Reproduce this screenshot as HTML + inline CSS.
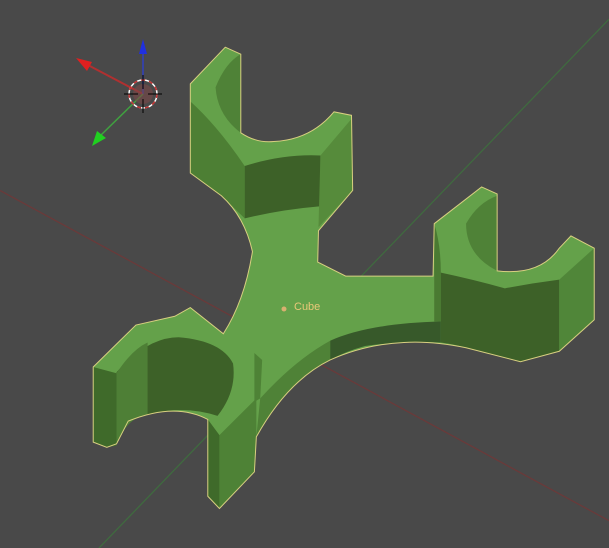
<!DOCTYPE html>
<html><head><style>
html,body{margin:0;padding:0;background:#494949;width:609px;height:548px;overflow:hidden}
svg{position:absolute;left:0;top:0}
</style></head><body>
<svg width="609" height="548" viewBox="0 0 1568 1568" preserveAspectRatio="none">
<line x1="0" y1="545" x2="1568" y2="1490" stroke="#6a3a3a" stroke-width="1.3" vector-effect="non-scaling-stroke"/>
<line x1="1568" y1="55" x2="255" y2="1568" stroke="#3f6a3f" stroke-width="1.3" vector-effect="non-scaling-stroke"/>
<!-- silhouette top face -->
<path d="M490,240 L580,135 L620,155 L620,380 Q660,410 705,405 Q800,400 860,320 L905,330 L908,545 L820,660 L818,750 L890,790 L1115,790 L1118,640 L1240,535 L1280,555 L1280,775 Q1390,790 1440,710 L1470,675 L1530,710 L1530,915 L1440,1005 L1340,1035 L1200,995 Q1110,975 1040,980 Q940,985 850,1030 Q740,1090 660,1250 L655,1350 L565,1455 L535,1420 L535,1200 Q450,1150 330,1205 L300,1270 L275,1280 L240,1265 L240,1050 L350,930 L450,905 L490,880 L575,955 Q630,860 650,720 Q630,620 570,560 L490,495 Z" fill="#64a14a"/>
<!-- top prong faces -->
<path d="M490,290 Q560,360 630,475 L630,625 L570,560 L490,495 Z" fill="#4d7f34"/>
<path d="M630,475 Q730,440 825,445 L825,590 Q720,600 630,625 Z" fill="#3d6128"/>
<path d="M825,445 L905,340 L908,545 L820,650 Z" fill="#568b3b"/>
<path d="M555,250 Q580,180 620,155 L620,380 Q560,330 555,250 Z" fill="#4f8237"/>
<!-- right prong -->
<path d="M1200,640 Q1230,580 1280,560 L1280,775 Q1200,730 1200,640 Z" fill="#4f8237"/>
<path d="M1118,640 Q1135,700 1135,780 L1135,920 L1118,920 Z" fill="#4a7a32"/>
<path d="M1135,780 Q1220,800 1300,825 Q1370,810 1440,800 L1440,1005 L1340,1035 L1200,995 Q1170,985 1135,980 Z" fill="#3d6128"/>
<path d="M1440,800 L1530,710 L1530,915 L1440,1005 Z" fill="#508639"/>
<path d="M850,975 Q950,925 1135,920 L1135,980 Q1040,975 940,990 Q890,1005 850,1030 Z" fill="#37592a"/>
<!-- center to bottom curved face -->
<path d="M670,1140 Q760,1030 850,975 L850,1030 Q740,1090 660,1250 Z" fill="#4f8237"/>
<!-- bottom prong -->
<path d="M535,1200 L565,1245 L565,1455 L535,1420 Z" fill="#3f6a2a"/>
<path d="M565,1245 L660,1140 L660,1250 L655,1350 L565,1455 Z" fill="#4e8236"/>
<path d="M655,1010 L675,1030 L670,1140 L655,1150 Z" fill="#4e8236"/>
<!-- left prong -->
<path d="M300,1065 Q380,965 460,965 Q570,975 600,1040 Q610,1120 560,1190 Q450,1150 330,1205 L300,1270 Z" fill="#3d6128"/>
<path d="M240,1050 L300,1068 L300,1275 L275,1280 L240,1265 Z" fill="#3f6a2a"/>
<path d="M300,1068 Q340,1000 380,980 L380,1185 Q340,1195 320,1230 L300,1270 Z" fill="#4e7f36"/>
<!-- outline -->
<path d="M490,240 L580,135 L620,155 L620,380 Q660,410 705,405 Q800,400 860,320 L905,330 L908,545 L820,660 L818,750 L890,790 L1115,790 L1118,640 L1240,535 L1280,555 L1280,775 Q1390,790 1440,710 L1470,675 L1530,710 L1530,915 L1440,1005 L1340,1035 L1200,995 Q1110,975 1040,980 Q940,985 850,1030 Q740,1090 660,1250 L655,1350 L565,1455 L535,1420 L535,1200 Q450,1150 330,1205 L300,1270 L275,1280 L240,1265 L240,1050 L350,930 L450,905 L490,880 L575,955 Q630,860 650,720 Q630,620 570,560 L490,495 Z" fill="none" stroke="#d8cf80" stroke-width="1" vector-effect="non-scaling-stroke"/>
</svg>
<svg width="609" height="548" viewBox="0 0 609 548">
<!-- gizmo -->
<line x1="143" y1="94" x2="86" y2="64" stroke="#b03030" stroke-width="2"/>
<path d="M76,58 L92,62 L87,71 Z" fill="#e02020"/>
<line x1="143" y1="94" x2="143" y2="52" stroke="#3040c0" stroke-width="1.5"/>
<path d="M143,39 L147,54 L139,54 Z" fill="#2030e0"/>
<line x1="143" y1="94" x2="100" y2="136" stroke="#40a040" stroke-width="1.5"/>
<path d="M92,146 L97,131 L106,138 Z" fill="#20d020"/>
<circle cx="143" cy="94" r="14" fill="none" stroke="#fff" stroke-width="1.5"/>
<circle cx="143" cy="94" r="14" fill="none" stroke="#c03030" stroke-width="1.5" stroke-dasharray="4 4"/>
<circle cx="143" cy="94" r="10" fill="#7a4848" opacity="0.6"/>
<line x1="124" y1="94" x2="138" y2="94" stroke="#000" stroke-width="1"/>
<line x1="148" y1="94" x2="162" y2="94" stroke="#000" stroke-width="1"/>
<line x1="143" y1="75" x2="143" y2="89" stroke="#000" stroke-width="1"/>
<line x1="143" y1="99" x2="143" y2="113" stroke="#000" stroke-width="1"/>
<circle cx="284" cy="309" r="2.5" fill="#d8b070"/>
<text x="294" y="310" font-family="Liberation Sans, sans-serif" font-size="11" fill="#e8c878">Cube</text>
</svg>
</body></html>
